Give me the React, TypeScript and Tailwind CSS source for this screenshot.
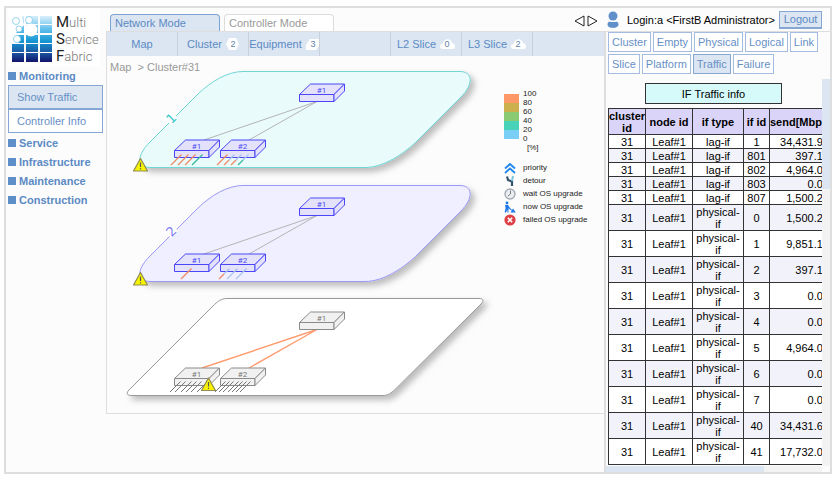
import React from "react";

type Tone = { fill: string; line: string; text: string };
type Tick = { x: number; color: string; tip?: string };

const TEAL = "#35b99a";
const ORANGE = "#ee8a63";
const SKY = "#a9c4ee";
const GREY = "#777777";

const blueNode: Tone = { fill: "#e3e2fa", line: "#4b47f6", text: "#4b47f6" };
const greyNode: Tone = { fill: "#f1f1f1", line: "#8a8a8a", text: "#777777" };

function DeviceBox({ x, y, label, tone }: { x: number; y: number; label: string; tone: Tone }) {
  return (
    <g transform={`translate(${x} ${y})`} stroke={tone.line} fill={tone.fill} strokeWidth="1" strokeLinejoin="round">
      <path d="M0 0 L11 -10.5 H45 L34.5 0 Z" />
      <path d="M0 0 H34.5 V7 H0 Z" />
      <path d="M34.5 0 L45 -10.5 V-3.5 L34.5 7 Z" />
      <text x="22" y="-2" textAnchor="middle" fontSize="8" fill={tone.text} stroke="none" className="font-['Roboto',sans-serif]">
        {label}
      </text>
    </g>
  );
}

function Ticks({ items, y, width = 1.3 }: { items: Tick[]; y: number; width?: number }) {
  return (
    <g strokeWidth={width}>
      {items.map((t) => (
        <g key={t.x}>
          <path d={`M${t.x} ${y} l5 -5`} stroke={t.color} />
          <path d={`M${t.x + 5} ${y - 5} l5.5 -5.5`} stroke={t.tip ?? t.color} />
        </g>
      ))}
    </g>
  );
}

function Warning({ x, y }: { x: number; y: number }) {
  return (
    <g transform={`translate(${x} ${y})`}>
      <path d="M0 -6.5 L7 6 H-7 Z" fill="#f8f400" stroke="#8f8b55" strokeWidth="1.2" strokeLinejoin="round" />
      <path d="M0 -2.5 V2" stroke="#555" strokeWidth="1.2" />
      <path d="M0 3.2 V4.4" stroke="#555" strokeWidth="1.2" />
    </g>
  );
}

function PlaneLabel({ x, y, color, text }: { x: number; y: number; color: string; text: string }) {
  return (
    <g transform={`translate(${x} ${y}) rotate(-45)`}>
      <rect x="-5" y="-5" width="10" height="10" fill="#ffffff" />
      <text x="0" y="5" textAnchor="middle" fontSize="13" fill={color} className="font-['DejaVu_Sans',sans-serif]">
        {text}
      </text>
    </g>
  );
}

const roundedPlane =
  "M243 71.5 H460 C472 71.5 475 83 460 98 L418 140 C405 153 384 167.5 365 167.5 H150 C138 167.5 135 157 150 142 L197 95 C211 81 228 71.5 243 71.5 Z";

function Topology() {
  return (
    <svg viewBox="107 56 390 357" className="block min-w-0 flex-1" role="img" aria-label="Cluster topology">
      <defs>
        <filter id="shade" x="-10%" y="-10%" width="120%" height="125%">
          <feDropShadow dx="4" dy="4" stdDeviation="3" floodColor="#000" floodOpacity="0.26" />
        </filter>
      </defs>

      <path d={roundedPlane} fill="#eafbfb" stroke="#6fd6d6" filter="url(#shade)" />
      <PlaneLabel x={171} y={118} color="#2fc6c6" text="1" />
      <path d="M204 140 L317 101.5 L249 140" fill="none" stroke="#b4b4b4" />
      <DeviceBox x={299.5} y={94.5} label="#1" tone={blueNode} />
      <DeviceBox x={174.5} y={150.5} label="#1" tone={blueNode} />
      <DeviceBox x={220.5} y={150.5} label="#2" tone={blueNode} />
      <Ticks
        y={165}
        items={[
          { x: 171, color: ORANGE },
          { x: 178, color: ORANGE },
          { x: 185, color: ORANGE },
          { x: 192, color: TEAL },
        ]}
      />
      <Ticks
        y={165}
        items={[
          { x: 217, color: ORANGE },
          { x: 224, color: ORANGE, tip: SKY },
          { x: 231, color: ORANGE, tip: SKY },
          { x: 238, color: TEAL, tip: SKY },
        ]}
      />
      <Warning x={140.5} y={165} />

      <g transform="translate(0 114)">
        <path d={roundedPlane} fill="#f0efff" stroke="#9a99f7" filter="url(#shade)" />
        <PlaneLabel x={171} y={117} color="#7d7cf5" text="2" />
        <path d="M204 140 L317 101.5 L249 140" fill="none" stroke="#b4b4b4" />
        <DeviceBox x={299.5} y={94.5} label="#1" tone={blueNode} />
        <DeviceBox x={174.5} y={150.5} label="#1" tone={blueNode} />
        <DeviceBox x={220.5} y={150.5} label="#2" tone={blueNode} />
        <Ticks
          y={165}
          items={[
            { x: 181, color: ORANGE },
            { x: 219, color: ORANGE, tip: SKY },
            { x: 227, color: SKY },
            { x: 236, color: SKY },
          ]}
        />
        <Warning x={140.5} y={165} />
      </g>

      <path
        d="M227 298.5 H479 C484 298.5 484 301 481 304 L395 389.5 C391 393 388 395.5 383 395.5 H131 C127 395.5 126 393 129 390 L213 306 C217 302 221 298.5 227 298.5 Z"
        fill="#ffffff"
        stroke="#999999"
        filter="url(#shade)"
      />
      <g transform="translate(0 228)">
        <path d="M202 140 L317 101.5 L249 140" fill="none" stroke="#ff9c70" strokeWidth="1.4" />
        <DeviceBox x={299.5} y={94.5} label="#1" tone={greyNode} />
        <DeviceBox x={174.5} y={150.5} label="#1" tone={greyNode} />
        <DeviceBox x={220.5} y={150.5} label="#2" tone={greyNode} />
        <Ticks y={164} width={1} items={[170, 175, 181, 186, 191, 197].map((x) => ({ x, color: GREY }))} />
        <Ticks y={164} width={1} items={[215, 219, 223, 228, 232, 236, 240].map((x) => ({ x, color: GREY }))} />
        <Warning x={208.5} y={156.5} />
      </g>
    </svg>
  );
}

function LegendIcon({ kind }: { kind: string }) {
  return (
    <svg viewBox="0 0 12 12" className="h-3 w-3 shrink-0" fill="none" aria-hidden="true">
      {kind === "priority" && (
        <path d="M1 6.5 L6 2 L11 6.5 M1 11 L6 6.5 L11 11" stroke="#1f86ee" strokeWidth="1.8" />
      )}
      {kind === "detour" && (
        <>
          <path d="M3 1.5 L4 5 L8 6.5 V11" stroke="#34536b" strokeWidth="2.2" />
          <path d="M9 1 L8 6" stroke="#7cc4dc" strokeWidth="2" />
        </>
      )}
      {kind === "wait" && (
        <>
          <circle cx="6" cy="6" r="5" fill="#eceef2" stroke="#a6abb5" strokeWidth="1.4" />
          <path d="M6.5 2.5 V6 L4 8" stroke="#777d88" />
        </>
      )}
      {kind === "now" && (
        <g fill="#1f78e8">
          <circle cx="3" cy="2" r="1.4" />
          <path d="M1 4 H4 L6 7 L8 9 L7.5 9.7 L4.5 7.2 V11.5 H3.4 V8.5 L2 11.5 H0.6 L1.6 7 Z" />
          <path d="M6.5 11.5 L9 7.5 L11.8 11.5 Z" />
        </g>
      )}
      {kind === "failed" && (
        <>
          <circle cx="6" cy="6" r="5.6" fill="#dc3f45" />
          <path d="M3.8 3.8 L8.2 8.2 M8.2 3.8 L3.8 8.2" stroke="#fff" strokeWidth="1.6" />
        </>
      )}
    </svg>
  );
}

const legendRows = [
  { kind: "priority", text: "priority" },
  { kind: "detour", text: "detour" },
  { kind: "wait", text: "wait OS upgrade" },
  { kind: "now", text: "now OS upgrade" },
  { kind: "failed", text: "failed OS upgrade" },
];

function Legend() {
  return (
    <div className="w-[107px] shrink-0 pl-[7px] pt-[33px] text-[8px] leading-[9px] text-[#222]">
      <div className="flex gap-1">
        <div className="mt-[5px] w-[15px]">
          <div className="h-[9px] bg-[#ff9868]" />
          <div className="h-[9px] bg-[#cdb04e]" />
          <div className="h-[9px] bg-[#8aca72]" />
          <div className="h-[9px] bg-[#48d3b8]" />
          <div className="h-[9px] bg-[#78cef4]" />
        </div>
        <div>
          {["100", "80", "60", "40", "20", "0"].map((v) => (
            <div key={v}>{v}</div>
          ))}
          <div className="pl-1">[%]</div>
        </div>
      </div>
      <ul className="mt-[9px]">
        {legendRows.map((r) => (
          <li key={r.kind} className="flex h-[13px] items-center gap-[7px]">
            <LegendIcon kind={r.kind} />
            <span className="whitespace-nowrap">{r.text}</span>
          </li>
        ))}
      </ul>
    </div>
  );
}

function Logo() {
  return (
    <div className="flex h-[58px] w-[92px] items-center gap-1 bg-white pl-1 pt-1">
      <svg viewBox="0 0 40 46" className="h-[46px] w-10 shrink-0" aria-hidden="true">
        <defs>
          <linearGradient id="tiles" x1="0" y1="0" x2="0" y2="46" gradientUnits="userSpaceOnUse">
            <stop offset="0" stopColor="#d9effb" />
            <stop offset="0.3" stopColor="#5cbdea" />
            <stop offset="0.55" stopColor="#1596d3" />
            <stop offset="0.8" stopColor="#1c55a2" />
            <stop offset="1" stopColor="#10146a" />
          </linearGradient>
        </defs>
        {[0, 14, 28].map((x) =>
          [0, 9, 19, 28, 37].map((y) => (
            <rect key={`${x}-${y}`} x={x} y={y} width="12" height={y === 37 ? 9 : 8} fill="url(#tiles)" />
          )),
        )}
        <path d="M0 0 H10 L12 9 L4 17 L9 24 L5 28 H0 Z" fill="#ffffff" />
        <g fill="#ffffff" stroke="#7cc8ea" strokeWidth="0.8">
          <circle cx="4" cy="5" r="3.5" />
          <circle cx="17" cy="4" r="3.5" />
          <circle cx="7" cy="13" r="3" />
          <circle cx="5" cy="23" r="3.5" />
        </g>
        <circle cx="19" cy="14" r="6.5" fill="#ffffff" />
      </svg>
      <div className="font-['Roboto',sans-serif] text-[13px] font-light leading-[17px] text-[#777]">
        {["Multi", "Service", "Fabric"].map((w) => (
          <div key={w}>
            <span className="text-[15px] font-normal text-[#222]">{w[0]}</span>
            {w.slice(1)}
          </div>
        ))}
      </div>
    </div>
  );
}

function MenuHeading({ children }: { children: React.ReactNode }) {
  return (
    <h2 className="flex h-[19px] items-center gap-[3px] font-bold text-[#5b8ac4]">
      <span className="h-2 w-2 bg-[#5f8fc9]" />
      {children}
    </h2>
  );
}

function Sidebar() {
  return (
    <aside className="w-[100px] shrink-0 pl-[2px]">
      <Logo />
      <MenuHeading>Monitoring</MenuHeading>
      <div className="flex w-[95px] flex-col text-[#6790c6]">
        <button className="h-6 border border-[#86a7d3] bg-[#dce6f2] pl-2 text-left">Show Traffic</button>
        <button className="h-6 border border-[#86a7d3] bg-white pl-2 text-left">Controller Info</button>
      </div>
      <MenuHeading>Service</MenuHeading>
      <MenuHeading>Infrastructure</MenuHeading>
      <MenuHeading>Maintenance</MenuHeading>
      <MenuHeading>Construction</MenuHeading>
    </aside>
  );
}

const badgeShapes: Record<string, string> = {
  hex: "M3 0 H10 L13 6 L10 12 H3 L0 6 Z",
  cut: "M4 1 H13 V8 L10 12 H0 V7 Z",
  cloud: "M3 11 C-1 11 -1 6 3 5.5 C4 0 11 0 12 5 C16 6 16 11 12 11 Z",
};

function CountBadge({ shape, value }: { shape: string; value: number }) {
  const wide = shape === "cloud";
  return (
    <svg viewBox={wide ? "0 0 15 12" : "0 0 13 12"} className={"h-3 shrink-0 " + (wide ? "w-[15px]" : "w-[13px]")}>
      <path d={badgeShapes[shape]} fill="#ffffff" />
      <text x="7" y="9" textAnchor="middle" fontSize="9" fill="#5f7fa8">
        {value}
      </text>
    </svg>
  );
}

function NavItem({ label, shape, value }: { label?: string; shape?: string; value?: number }) {
  return (
    <button className="flex h-6 w-[71px] shrink-0 items-center justify-center gap-1 border-r border-[#c9d0da]">
      {label}
      {shape && <CountBadge shape={shape} value={value ?? 0} />}
    </button>
  );
}

const filters = ["Cluster", "Empty", "Physical", "Logical", "Link", "Slice", "Platform", "Traffic", "Failure"];

const rows: [string, string, string][] = [
  ["lag-if", "1", "34,431.92"],
  ["lag-if", "801", "397.13"],
  ["lag-if", "802", "4,964.08"],
  ["lag-if", "803", "0.00"],
  ["lag-if", "807", "1,500.21"],
  ["physical-if", "0", "1,500.20"],
  ["physical-if", "1", "9,851.13"],
  ["physical-if", "2", "397.12"],
  ["physical-if", "3", "0.00"],
  ["physical-if", "4", "0.00"],
  ["physical-if", "5", "4,964.05"],
  ["physical-if", "6", "0.00"],
  ["physical-if", "7", "0.00"],
  ["physical-if", "40", "34,431.63"],
  ["physical-if", "41", "17,732.00"],
];

function TrafficTable() {
  return (
    <table className="ml-[2px] mt-1 w-[221px] table-fixed border-collapse text-center leading-[12px] text-black">
      <colgroup>
        <col className="w-[37px]" />
        <col className="w-[47px]" />
        <col className="w-[51px]" />
        <col className="w-[26px]" />
        <col className="w-[60px]" />
      </colgroup>
      <thead>
        <tr className="bg-[#dad4f9]">
          {["cluster id", "node id", "if type", "if id", "send[Mbps]"].map((h) => (
            <th key={h} className="border border-[#333] px-0 pb-0 pt-px">
              {h}
            </th>
          ))}
        </tr>
      </thead>
      <tbody>
        {rows.map(([type, id, send]) => (
          <tr key={id} className="bg-white even:bg-[#f2f3fa]">
            <td className="border border-[#333] pt-px">31</td>
            <td className="border border-[#333] pt-px">Leaf#1</td>
            <td className="border border-[#333] px-[2px] pt-px">{type}</td>
            <td className="border border-[#333] pt-px">{id}</td>
            <td className="border border-[#333] pt-px text-right">{send}</td>
          </tr>
        ))}
      </tbody>
    </table>
  );
}

function TrafficPanel() {
  return (
    <section className="flex w-[226px] shrink-0 flex-col border-l-2 border-[#dedede]">
      <div className="flex flex-wrap gap-[2px] pb-[5px] pl-[2px]">
        {filters.map((f) => (
          <button
            key={f}
            className={
              "h-5 border px-[3px] text-[#6790c6] " +
              (f === "Traffic" ? "border-[#86a7d3] bg-[#dce6f2]" : "border-[#a3bce0] bg-white")
            }
          >
            {f}
          </button>
        ))}
      </div>
      <div className="flex">
        <div className="h-[387px] min-w-0 flex-1 overflow-hidden pt-1">
          <h3 className="ml-[39px] flex h-[21px] w-[137px] items-center justify-center border border-[#333] bg-[#d5faf9] text-black">
            IF Traffic info
          </h3>
          <TrafficTable />
        </div>
        <div className="w-2 bg-[#f3f3f3]">
          <div className="h-[110px] bg-[#dce6f2]" />
        </div>
      </div>
      <div className="mr-2 h-[6px] bg-[#f3f3f3]">
        <div className="h-full w-[158px] bg-[#dce6f2]" />
      </div>
    </section>
  );
}

export default function App() {
  return (
    <div className="bg-white pb-[10px] pl-1 pr-[2px] pt-[6px] font-['Liberation_Sans',Arial,sans-serif] text-[11px] leading-[14px]">
      <div className="flex border-2 border-[#dedede] bg-[#fcfcfc]">
        <Sidebar />
        <main className="min-w-0 flex-1">
          <header className="flex h-6 border-b border-[#dedede]">
            <div className="flex flex-1 items-end gap-1 pl-1">
              <button className="h-[17px] w-[110px] rounded-t border border-b-0 border-[#7ea3d3] bg-[#dce6f2] pl-1 text-left text-[#5b8ac4]">
                Network Mode
              </button>
              <button className="h-[17px] w-[110px] rounded-t border border-b-0 border-[#dcdcdc] bg-white pl-1 text-left text-[#999]">
                Controller Mode
              </button>
            </div>
            <svg viewBox="0 0 24 12" className="mr-1 mt-[7px] h-3 w-6" fill="#fff" stroke="#222">
              <path d="M10 1 V11 L1 6 Z" />
              <path d="M14 1 V11 L23 6 Z" />
            </svg>
            <div className="flex w-[228px] items-center pl-[5px] text-black">
              <svg viewBox="0 0 12 18" className="mr-2 h-[18px] w-3 shrink-0" fill="#5f90c9" aria-hidden="true">
                <ellipse cx="6" cy="5" rx="4.5" ry="4.5" />
                <path d="M0.5 13.5 C0.5 9.5 4 11 6 11 C8 11 11.5 9.5 11.5 13.5 C11.5 18 0.5 18 0.5 13.5 Z" />
              </svg>
              <span className="flex-1 whitespace-nowrap">Login:a &lt;FirstB Administrator&gt;</span>
              <button className="mr-2 h-[18px] w-[43px] border border-b-2 border-[#86a7d3] bg-[#dce6f2] leading-[14px] text-[#5b8ac4]">
                Logout
              </button>
            </div>
          </header>
          <div className="flex items-start">
            <div className="min-w-0 flex-1 border-b border-l border-[#dedede]">
              <nav className="flex h-6 bg-[#dce6f2] text-[#5b8ac4]">
                <NavItem label="Map" />
                <NavItem label="Cluster" shape="hex" value={2} />
                <NavItem label="Equipment" shape="cut" value={3} />
                <NavItem />
                <NavItem label="L2 Slice" shape="cloud" value={0} />
                <NavItem label="L3 Slice" shape="cloud" value={2} />
              </nav>
              <div className="grid">
                <div className="z-10 col-start-1 row-start-1 self-start pl-[3px] pt-1 text-[#999]">
                  <a href="#map">Map</a>&nbsp; &gt; <span>Cluster#31</span>
                </div>
                <div className="col-start-1 row-start-1 flex items-start">
                  <Topology />
                  <Legend />
                </div>
              </div>
            </div>
            <TrafficPanel />
          </div>
        </main>
      </div>
    </div>
  );
}
